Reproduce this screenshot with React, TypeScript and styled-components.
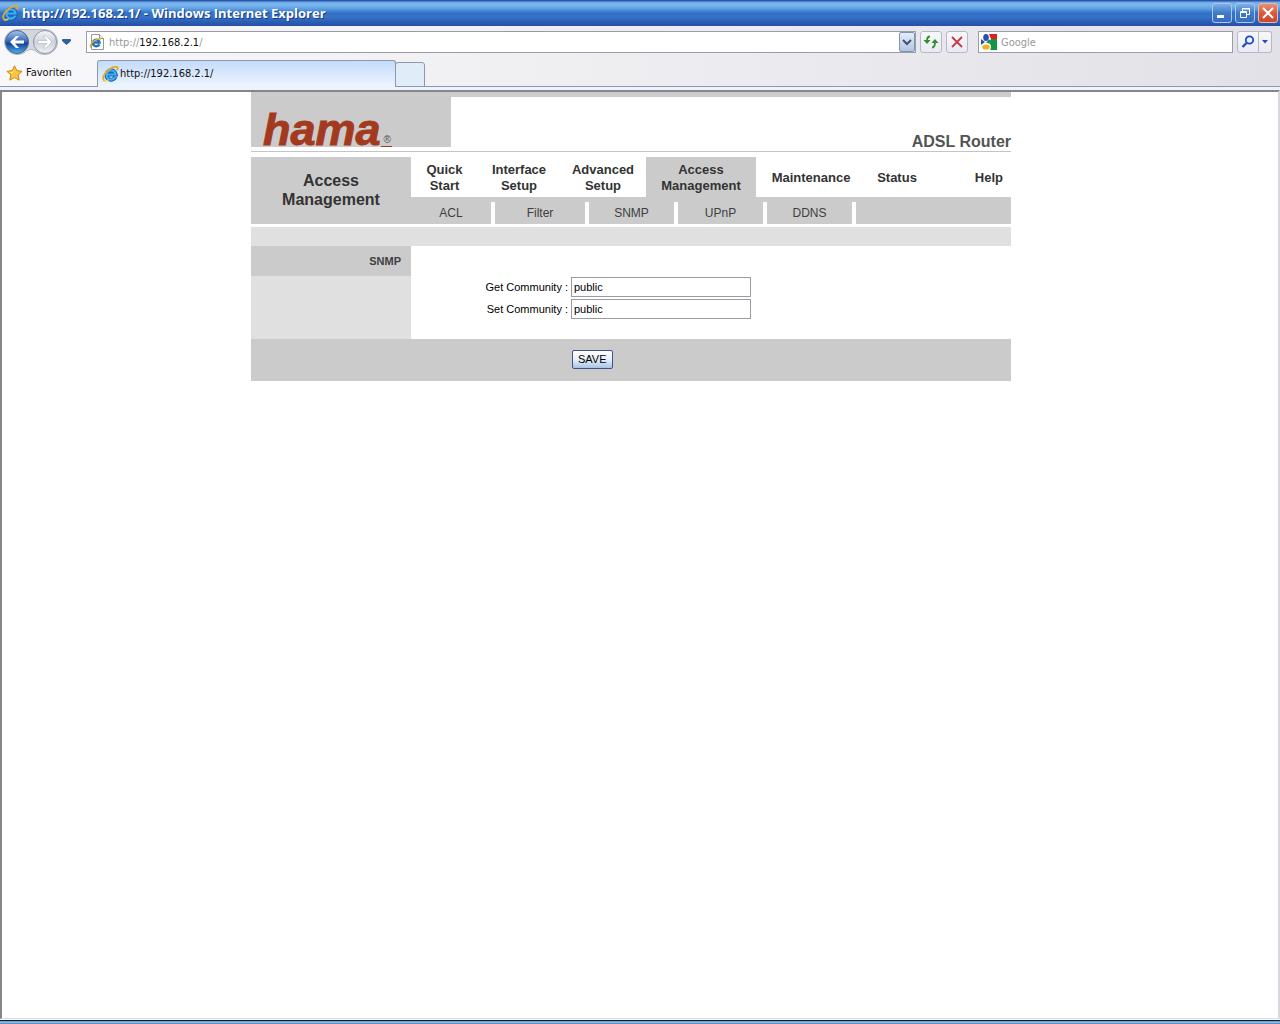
import React from "react";
import styled, { createGlobalStyle } from "styled-components";

const ui = `"DejaVu Sans Condensed", "Open Sans", sans-serif`;
const arial = `"Liberation Sans", Arial, sans-serif`;

const GlobalStyle = createGlobalStyle`
  * { box-sizing: border-box; }
  body { margin: 0; background: #fff; }
  a { color: inherit; text-decoration: none; }
  button, input { margin: 0; font: inherit; }
  svg { display: block; flex: none; }
`;

const Window = styled.div`
  display: flex;
  flex-direction: column;
  min-height: 100vh;
  font: 11px/14px ${ui};
  color: #111;
`;

const TitleBar = styled.header`
  display: flex;
  align-items: center;
  gap: 3px;
  height: 26px;
  padding: 0 2px;
  background: linear-gradient(#2a55a8 0, #2a55a8 1px, #6cabe8 2px, #7db8ee 5px, #5a9de0 9px, #2f70c4 13px, #3573c8 17px, #2c5cb4 22px, #2450a4 26px);
`;

const WindowTitle = styled.h1`
  flex: 1;
  margin: 0;
  font: 700 13px/18px "Open Sans", sans-serif;
  color: #fff;
  text-shadow: 1px 1px 0 #1c3c86;
`;

const CaptionButton = styled.button<{ $close?: boolean }>`
  display: grid;
  place-items: center;
  width: 20px;
  height: 20px;
  padding: 0;
  border: 1px solid ${(p) => (p.$close ? "#e9b9ae" : "#a9c8ee")};
  border-radius: 3px;
  background: ${(p) =>
    p.$close
      ? "linear-gradient(#e8907a, #d85a3c 50%, #c9482c)"
      : "linear-gradient(#7fb0e6, #3f79c9 50%, #3a6cbc)"};
`;

const Toolbar = styled.div`
  background: linear-gradient(90deg, #f8f8fa, #f0eff2 40%, #e2e1e7);
`;

const AddressRow = styled.div`
  display: flex;
  align-items: center;
  height: 32px;
  padding: 0 8px 0 4px;
`;

const NavButtons = styled.div`
  display: flex;
  align-items: center;
  width: 82px;
`;

const PlainButton = styled.button<{ $inset?: boolean }>`
  display: flex;
  align-items: center;
  gap: 3px;
  padding: 0 0 0 ${(p) => (p.$inset ? "4px" : "0")};
  border: 0;
  background: none;
  color: inherit;
`;

const Field = styled.label<{ $grow?: boolean }>`
  display: flex;
  align-items: center;
  gap: 4px;
  flex: ${(p) => (p.$grow ? "1" : "0 0 255px")};
  height: 22px;
  padding-left: 2px;
  border: 1px solid #9b9bab;
  background: #fff;
`;

const FieldInput = styled.input`
  flex: 1;
  min-width: 0;
  padding: 2px 0 0;
  border: 0;
  outline: 0;
  background: none;
  &::placeholder { color: #999; opacity: 1; }
`;

const AddressText = styled.a`
  flex: 1;
  padding-top: 2px;
  color: #999;
  b { font-weight: 400; color: #111; }
`;

const ToolButton = styled.button<{ $width: number; $filled?: boolean }>`
  display: grid;
  place-items: center;
  width: ${(p) => p.$width}px;
  height: 22px;
  padding: 0;
  border: 1px solid #b4b8ca;
  border-radius: 3px;
  background: ${(p) => (p.$filled ? "linear-gradient(#e4edf7, #b3c6df)" : "linear-gradient(#f8f8fb, #e9eaf2)")};
`;

const AddressTools = styled.div`
  display: flex;
  gap: 4px;
  margin: 0 10px 0 4px;
`;

const DropButton = styled(ToolButton)`
  height: 20px;
  border-color: #7f93b4;
  border-radius: 2px;
`;

const SearchTools = styled.div`
  display: flex;
  margin-left: 4px;
  button:first-child { border-radius: 3px 0 0 3px; }
  button:last-child { border-left: 0; border-radius: 0 3px 3px 0; }
`;

const TabRow = styled.div`
  display: flex;
  align-items: flex-end;
  height: 29px;
  box-shadow: inset 0 -1px #8b98ae;
`;

const Favourites = styled.div`
  display: flex;
  align-items: center;
  width: 97px;
  height: 29px;
  padding-left: 6px;
`;

const Tab = styled.button`
  display: flex;
  align-items: center;
  gap: 1px;
  width: 299px;
  height: 27px;
  padding: 0 4px;
  border: 1px solid #8b98ae;
  border-bottom: 0;
  border-radius: 3px 3px 0 0;
  background: linear-gradient(#c4dbf9, #eef5fe);
  color: #111;
`;

const NewTab = styled.button`
  width: 30px;
  height: 25px;
  margin-left: -1px;
  border: 1px solid #8b98ae;
  border-radius: 3px 3px 0 0;
  background: #e0ecf8;
`;

const TabEdge = styled.div`
  height: 3px;
  background: #eef3fb;
`;

const Viewport = styled.main`
  flex: 1;
  padding-right: 18px;
  border: solid #84868c;
  border-width: 2px 2px 1px;
  border-right-color: #d5d9df;
  border-bottom-color: #d5dde6;
  background: #fff;
  font-family: ${arial};
`;

const TaskbarEdge = styled.div`
  height: 5px;
  background: linear-gradient(#fff 0 1px, #101c2c 1px 2px, #6f9fd4 2px 3px, #8db8e4 3px 4px, #5d8fc6 4px);
`;

const Page = styled.div`
  width: 100%;
  max-width: 760px;
  margin: 0 auto;
`;

const Brand = styled.div`
  display: flex;
  justify-content: space-between;
  align-items: flex-end;
  height: 60px;
  border-top: 5px solid #cbcbcb;
  border-bottom: 1px solid #c4c4c4;
`;

const Logo = styled.a`
  display: flex;
  align-items: flex-end;
  align-self: flex-start;
  width: 200px;
  height: 50px;
  padding-left: 12px;
  background: #cbcbcb;
`;

const LogoWord = styled.span`
  height: 34px;
  font: italic bold 45px/34px ${arial};
  color: #a33a20;
  -webkit-text-stroke: 1px #a33a20;
`;

const LogoMark = styled.span`
  align-self: stretch;
  display: flex;
  align-items: flex-end;
  padding: 0 1px 0 3px;
  border-bottom: 1px solid #a33a20;
  font: 10px/12px ${arial};
  color: #555;
`;

const Product = styled.h2`
  margin: 0;
  font: bold 16px/18px ${arial};
  color: #535353;
`;

const Menu = styled.div`
  display: grid;
  grid-template-columns: 160px 1fr;
  margin: 5px 0 3px;
  background: #cbcbcb;
`;

const SectionTitle = styled.h3`
  display: grid;
  place-items: center;
  margin: 0;
  padding: 0 20px 2px;
  font: bold 16px/19px ${arial};
  text-align: center;
  color: #333;
`;

const MainNav = styled.nav`
  display: grid;
  grid-template-columns: 67fr 82fr 86fr 110fr 110fr 62fr 83fr;
  height: 40px;
  margin-bottom: 5px;
  background: #fff;
`;

const MainLink = styled.a<{ $active?: boolean; $end?: boolean }>`
  display: grid;
  align-items: center;
  justify-content: ${(p) => (p.$end ? "end" : "center")};
  padding: 2px 8px 0;
  background: ${(p) => (p.$active ? "#cbcbcb" : "#fff")};
  font: bold 13px/16px ${arial};
  text-align: center;
  color: #333;
`;

const SubNav = styled.nav`
  display: grid;
  grid-template-columns: 84fr 94fr 89fr 89fr 89fr 155fr;
  height: 22px;
`;

const SubLink = styled.a`
  border-right: 4px solid #fff;
  font-size: 12px;
  line-height: 22px;
  text-align: center;
  color: #404040;
`;

const Strip = styled.div`
  height: 19px;
  background: #e0e0e0;
`;

const Body = styled.div`
  display: grid;
  grid-template-columns: 160px 1fr;
`;

const Side = styled.div`
  background: #e0e0e0;
`;

const SideTitle = styled.h4`
  margin: 0;
  padding-right: 10px;
  background: #cbcbcb;
  font: bold 11px/30px ${arial};
  text-align: right;
  color: #404040;
`;

const Rows = styled.div`
  display: grid;
  gap: 2px;
  padding: 31px 0 20px;
`;

const Row = styled.div`
  display: grid;
  grid-template-columns: 157px 180px;
  column-gap: 3px;
  align-items: center;
`;

const Label = styled.label`
  text-align: right;
  color: #000;
`;

const TextBox = styled.input`
  height: 20px;
  padding: 0 2px;
  border: 1px solid #999ba0;
  background: #fff;
  color: #000;
`;

const Footer = styled.div`
  padding: 11px 0 12px 321px;
  background: #cbcbcb;
`;

const Save = styled.button`
  display: block;
  height: 19px;
  padding: 0 5px;
  border: 1px solid #3b5688;
  border-radius: 2px;
  background: linear-gradient(#fff, #e7effa 50%, #a9c3e6);
  line-height: 17px;
  color: #000;
`;

const IeMark = () => (
  <svg width="17" height="16" viewBox="0 0 17 16" fill="none" aria-hidden="true">
    <path d="M13.5 10.8A4.700 4.700 0 1 1 13.800 8.600H5.500" stroke="#1560b4" strokeWidth="4" />
    <path d="M13.300 10.600A4.600 4.600 0 1 1 13.600 8.500H5.500" stroke="#3fb0f2" strokeWidth="2.200" />
    <path d="M2.500 14.800C-.8 12.500 3 5.500 8.500 2.500 12 .6 15.500.2 15.700 2c.1.9-.2 1.500-.7 2.200" stroke="#e8a91f" strokeWidth="1.800" />
    <path d="M2.300 14.700c1 .6 2.800 0 4.200-.8" stroke="#f6d055" strokeWidth="1.600" />
  </svg>
);

const navBackdrop = "M13 1.500h28a12 12 0 0 1 0 25c-8 0-9-5-14-5s-6 5-14 5a12 12 0 0 1 0-25z";

const BackIcon = () => (
  <svg width="26" height="28" viewBox="0 0 26 28" aria-hidden="true">
    <defs>
      <linearGradient id="back" x2="0" y2="1">
        <stop stopColor="#a9c6ec" />
        <stop offset=".5" stopColor="#2e62b4" />
        <stop offset=".55" stopColor="#123f92" />
        <stop offset="1" stopColor="#4fb2ee" />
      </linearGradient>
    </defs>
    <path d={navBackdrop} fill="#d3d6dc" stroke="#b4b8c2" />
    <circle cx="13" cy="14" r="11.500" fill="url(#back)" stroke="#45618f" />
    <path d="M6 14l6-6h3l-4 4.500h9v3h-9l4 4.500h-3z" fill="#fff" />
  </svg>
);

const NextIcon = () => (
  <svg width="28" height="28" viewBox="26 0 28 28" aria-hidden="true">
    <defs>
      <linearGradient id="next" x2="0" y2="1">
        <stop stopColor="#f4f5f8" />
        <stop offset=".5" stopColor="#cdd2dc" />
        <stop offset="1" stopColor="#eef0f4" />
      </linearGradient>
    </defs>
    <path d={navBackdrop} fill="#d3d6dc" stroke="#b4b8c2" />
    <circle cx="41" cy="14" r="11.500" fill="url(#next)" stroke="#8e95a4" />
    <path d="M48 14l-6-6h-3l4 4.500h-9v3h9l-4 4.500h3z" fill="#fff" stroke="#aeb4c0" strokeWidth=".6" />
  </svg>
);

const Caret = () => (
  <svg width="9" height="6" viewBox="0 0 9 6" aria-hidden="true">
    <path d="M.5.5h8v1.500l-4 3.500-4-3.500z" fill="#2563a8" stroke="#1d3f77" strokeWidth=".7" />
  </svg>
);

const menu = [
  { text: "Quick Start" },
  { text: "Interface Setup" },
  { text: "Advanced Setup" },
  { text: "Access Management", active: true },
  { text: "Maintenance" },
  { text: "Status" },
  { text: "Help", end: true },
];

const pages = ["ACL", "Filter", "SNMP", "UPnP", "DDNS"];

const settings = [
  { id: "get", label: "Get Community :" },
  { id: "set", label: "Set Community :" },
];

export default function App() {
  return (
    <Window>
      <GlobalStyle />
      <TitleBar>
        <IeMark />
        <WindowTitle>http://192.168.2.1/ - Windows Internet Explorer</WindowTitle>
        <CaptionButton aria-label="Minimize">
          <svg width="12" height="12"><path d="M1 8h7v3H1z" fill="#fff" /></svg>
        </CaptionButton>
        <CaptionButton aria-label="Restore">
          <svg width="12" height="12" fill="none" stroke="#fff">
            <path d="M3.500 4V1.500h7v6H8M3 2h8" />
            <path d="M1.500 4.500h6v6h-6zM1 5.500h7" />
          </svg>
        </CaptionButton>
        <CaptionButton $close aria-label="Close">
          <svg width="12" height="12"><path d="M1 1l10 10M11 1L1 11" stroke="#fff" strokeWidth="2" /></svg>
        </CaptionButton>
      </TitleBar>

      <Toolbar>
        <AddressRow>
          <NavButtons>
            <PlainButton aria-label="Back"><BackIcon /></PlainButton>
            <PlainButton aria-label="Forward"><NextIcon /></PlainButton>
            <PlainButton $inset aria-label="Recent pages"><Caret /></PlainButton>
          </NavButtons>
          <Field as="div" $grow>
            <svg width="16" height="18" viewBox="0 0 16 18" aria-hidden="true">
              <path d="M2.500 1.500h8l4 4v11h-12z" fill="#fff" stroke="#999" />
              <path d="M10.500 1.500v4h4" fill="#eee" stroke="#999" />
              <path d="M10.300 11.200A3.300 3.300 0 1 1 10.500 9.500H5" fill="none" stroke="#1c70c6" strokeWidth="2.400" />
              <path d="M2 14.500C0 12 5 6 12 5.500" fill="none" stroke="#e5aa25" strokeWidth="1.400" />
            </svg>
            <AddressText href="#">http://<b>192.168.2.1</b>/</AddressText>
            <DropButton $width={16} $filled aria-label="Show addresses">
              <svg width="10" height="7"><path d="M1 1l4 4 4-4" fill="none" stroke="#3d5478" strokeWidth="2" /></svg>
            </DropButton>
          </Field>
          <AddressTools>
            <ToolButton $width={22} aria-label="Refresh">
              <svg width="16" height="14" viewBox="0 0 16 14" fill="none">
                <path d="M7 1.500C5 1.500 4 3 4 6M9 12.500c2 0 3-2 3-5.500" stroke="#2f8f2f" strokeWidth="1.800" />
                <path d="M.5 5h7L4 9zM8.500 8h7L12 4z" fill="#2f8f2f" />
              </svg>
            </ToolButton>
            <ToolButton $width={22} aria-label="Stop">
              <svg width="12" height="12"><path d="M1 1l10 10M11 1L1 11" stroke="#c23b48" strokeWidth="1.800" /></svg>
            </ToolButton>
          </AddressTools>
          <Field>
            <svg width="16" height="16" viewBox="0 0 16 16" aria-hidden="true">
              <path d="M8 0h8v5H10z" fill="#e01f1f" />
              <path d="M10 5h6v11H9c2-3 1-5-1-7z" fill="#159447" />
              <path d="M0 5l4 3-4 3z" fill="#2850b0" />
              <ellipse cx="5" cy="3.500" rx="2.800" ry="3.500" fill="#2850b0" />
              <ellipse cx="5" cy="13" rx="3.800" ry="2.600" fill="#e9b322" />
              <path d="M5 8.500l3-3 2 1-2 3z" fill="#159447" />
            </svg>
            <FieldInput placeholder="Google" aria-label="Search" />
          </Field>
          <SearchTools>
            <ToolButton $width={22} aria-label="Search">
              <svg width="14" height="14"><circle cx="8.500" cy="5" r="3.700" fill="#e8f2ff" stroke="#2449c4" strokeWidth="1.800" /><path d="M5.500 8L1.500 12" stroke="#2449c4" strokeWidth="2.400" /></svg>
            </ToolButton>
            <ToolButton $width={13} aria-label="Search options">
              <svg width="6" height="4"><path d="M0 0h6L3 3.500z" fill="#2449c4" /></svg>
            </ToolButton>
          </SearchTools>
        </AddressRow>
        <TabRow>
          <Favourites>
            <PlainButton>
              <svg width="17" height="16" viewBox="0 0 17 16" aria-hidden="true">
                <path d="M8.500.8l2.300 4.800 5.300.7-3.900 3.600 1 5.200-4.700-2.500-4.700 2.500 1-5.200L.9 6.300l5.300-.7z" fill="#fbc63c" stroke="#c98716" strokeLinejoin="round" />
                <path d="M8.500 3.500L7 6.800l-3.500.6 3 1.100z" fill="#ffeeb0" />
              </svg>
              Favoriten
            </PlainButton>
          </Favourites>
          <Tab><IeMark />http://192.168.2.1/</Tab>
          <NewTab aria-label="New tab" />
        </TabRow>
        <TabEdge />
      </Toolbar>

      <Viewport>
        <Page>
          <Brand>
            <Logo href="#">
              <LogoWord>hama</LogoWord>
              <LogoMark>®</LogoMark>
            </Logo>
            <Product>ADSL Router</Product>
          </Brand>
          <Menu>
            <SectionTitle>Access Management</SectionTitle>
            <div>
              <MainNav>
                {menu.map((m) => (
                  <MainLink key={m.text} href="#" $active={m.active} $end={m.end}>{m.text}</MainLink>
                ))}
              </MainNav>
              <SubNav>
                {pages.map((p) => <SubLink key={p} href="#">{p}</SubLink>)}
              </SubNav>
            </div>
          </Menu>
          <Strip />
          <form onSubmit={(e) => e.preventDefault()}>
            <Body>
              <Side><SideTitle>SNMP</SideTitle></Side>
              <Rows>
                {settings.map((s) => (
                  <Row key={s.id}>
                    <Label htmlFor={s.id}>{s.label}</Label>
                    <TextBox id={s.id} defaultValue="public" />
                  </Row>
                ))}
              </Rows>
            </Body>
            <Footer><Save>SAVE</Save></Footer>
          </form>
        </Page>
      </Viewport>
      <TaskbarEdge />
    </Window>
  );
}
